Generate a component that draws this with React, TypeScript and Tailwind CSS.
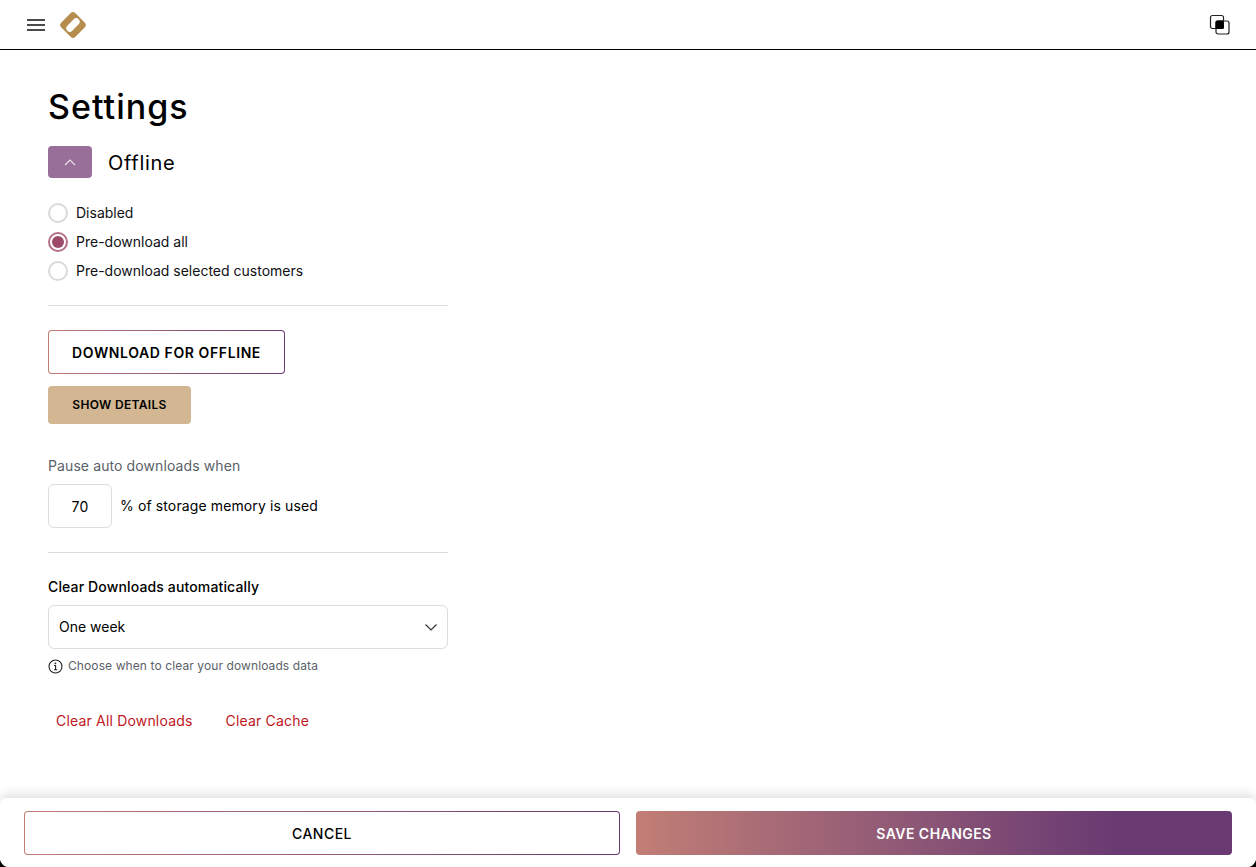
function Radio({ label, checked }: { label: string; checked?: boolean }) {
  return (
    <label className="flex items-center gap-2 h-[29px] text-sm text-[#101014]">
      {checked ? (
        <span className="flex items-center justify-center w-5 h-5 rounded-full border-2 border-[#b56f88]">
          <span className="w-3 h-3 rounded-full bg-[#9c4a68]" />
        </span>
      ) : (
        <span className="w-5 h-5 rounded-full border-2 border-[#d9d9de]" />
      )}
      {label}
    </label>
  );
}

function GradientOutline({
  className,
  children,
}: {
  className: string;
  children: React.ReactNode;
}) {
  return (
    <button
      className={
        "rounded bg-linear-to-r from-[#c27e75] to-[#6a3a72] p-px " + className
      }
    >
      <span className="flex items-center justify-center w-full h-full pt-0.5 rounded-[3px] bg-white">
        {children}
      </span>
    </button>
  );
}

export default function App() {
  return (
    <div className="relative flex flex-col h-[867px] bg-white overflow-hidden font-['Inter',sans-serif] text-black">
      <header className="flex items-center justify-between h-[50px] shrink-0 border-b border-black pl-[27px] pr-[25px]">
        <div className="flex items-center gap-[14px]">
          <svg width="18" height="12" viewBox="0 0 18 12">
            <path d="M0 1h18M0 6h18M0 11h18" stroke="#111" strokeWidth="1.7" />
          </svg>
          <svg width="28" height="28" viewBox="0 0 28 28">
            <rect
              x="4"
              y="4"
              width="20"
              height="20"
              rx="3.5"
              fill="#b58d4f"
              transform="rotate(45 14 14)"
            />
            <rect
              x="10.5"
              y="6"
              width="7"
              height="16"
              rx="3.5"
              fill="#fff"
              transform="rotate(45 14 14)"
            />
          </svg>
        </div>
        <svg width="22" height="22" viewBox="0 0 22 22" fill="none">
          <rect x="1.5" y="1.5" width="13" height="13" rx="2" stroke="#222" strokeWidth="1.2" />
          <rect x="7" y="7" width="13" height="13" rx="2" stroke="#222" strokeWidth="1.2" fill="#fff" />
          <rect x="6.5" y="6.5" width="8.5" height="8.5" rx="1.5" fill="#000" />
        </svg>
      </header>

      <main className="flex-1 pl-12 pt-[34px]">
        <h1 className="text-[34px] leading-[46px] font-medium tracking-[1px]">
          Settings
        </h1>
        <div className="flex items-center gap-4 mt-[16px]">
          <button className="flex items-center justify-center w-11 h-8 rounded bg-[#976f99]">
            <svg width="12" height="7" viewBox="0 0 12 7" fill="none">
              <path d="M1 6l5-5 5 5" stroke="#e9dfe9" strokeWidth="1.2" />
            </svg>
          </button>
          <span className="pt-0.5 text-xl tracking-[0.7px]">Offline</span>
        </div>

        <div className="flex flex-col w-[400px] mt-[20px]">
          <Radio label="Disabled" />
          <Radio label="Pre-download all" checked />
          <Radio label="Pre-download selected customers" />
          <div className="h-px bg-[#dcdcdc] mt-5" />
        </div>

        <GradientOutline className="block w-[237px] h-11 mt-6 text-sm font-semibold tracking-[0.6px]">
          DOWNLOAD FOR OFFLINE
        </GradientOutline>
        <button className="block w-[143px] h-[38px] mt-3 rounded bg-[#d2b792] text-xs font-semibold tracking-[0.33px]">
          SHOW DETAILS
        </button>

        <p className="mt-[33px] text-sm leading-[18px] tracking-[0.1px] text-[#5a5f69]">
          Pause auto downloads when
        </p>
        <div className="flex items-center gap-2 mt-[9px] text-sm tracking-[0.12px]">
          <div className="flex items-center justify-center w-16 h-11 pt-0.5 rounded-md border border-[#dddddd]">
            70
          </div>
          % of storage memory is used
        </div>

        <div className="w-[400px] h-px bg-[#dcdcdc] mt-6" />

        <p className="mt-[26px] text-sm leading-4 font-medium tracking-[0.14px]">
          Clear Downloads automatically
        </p>
        <div className="flex items-center justify-between w-[400px] h-11 mt-[10px] pl-[10px] pr-[10px] rounded-md border border-[#dddddd] text-sm">
          <span>One week</span>
          <svg width="12" height="7" viewBox="0 0 12 7" fill="none">
            <path d="M0.5 0.5l5.5 5.5 5.5-5.5" stroke="#333" strokeWidth="1.2" />
          </svg>
        </div>
        <div className="flex items-center gap-[5px] mt-[9px] text-xs leading-[16px] tracking-[0.1px] text-[#5a5f69]">
          <svg width="15" height="15" viewBox="0 0 15 15" fill="none">
            <circle cx="7.5" cy="7.5" r="6.5" stroke="#222" strokeWidth="1.1" />
            <path d="M6 6.5h1.6v4M6 10.7h3.2" stroke="#222" strokeWidth="1.1" />
            <circle cx="7.4" cy="4.3" r="0.9" fill="#222" />
          </svg>
          Choose when to clear your downloads data
        </div>
        <div className="flex gap-[33px] mt-[38px] ml-2 text-sm leading-[18px] tracking-[0.18px] text-[#c01722]">
          <button>Clear All Downloads</button>
          <button>Clear Cache</button>
        </div>
      </main>

      <footer className="grid grid-cols-2 gap-4 h-[69px] shrink-0 px-6 pt-[13px] bg-white rounded-t-md shadow-[0_-3px_12px_rgba(0,0,0,0.14)] text-sm font-medium tracking-[0.5px]">
        <GradientOutline className="h-11">CANCEL</GradientOutline>
        <button className="h-11 pt-0.5 rounded bg-linear-to-r from-[#c27e75] from-0% to-[#6a3a72] to-80% text-white font-semibold tracking-[0.45px]">
          SAVE CHANGES
        </button>
      </footer>

      {/* black window corners at the bottom */}
      <svg className="absolute left-0 bottom-0" width="7" height="7" viewBox="0 0 7 7">
        <path d="M0 0C1 3 3 6 7 7H0Z" fill="#000" />
      </svg>
      <svg className="absolute right-0 bottom-0" width="7" height="7" viewBox="0 0 7 7">
        <path d="M7 0C6 3 4 6 0 7H7Z" fill="#000" />
      </svg>
    </div>
  );
}
